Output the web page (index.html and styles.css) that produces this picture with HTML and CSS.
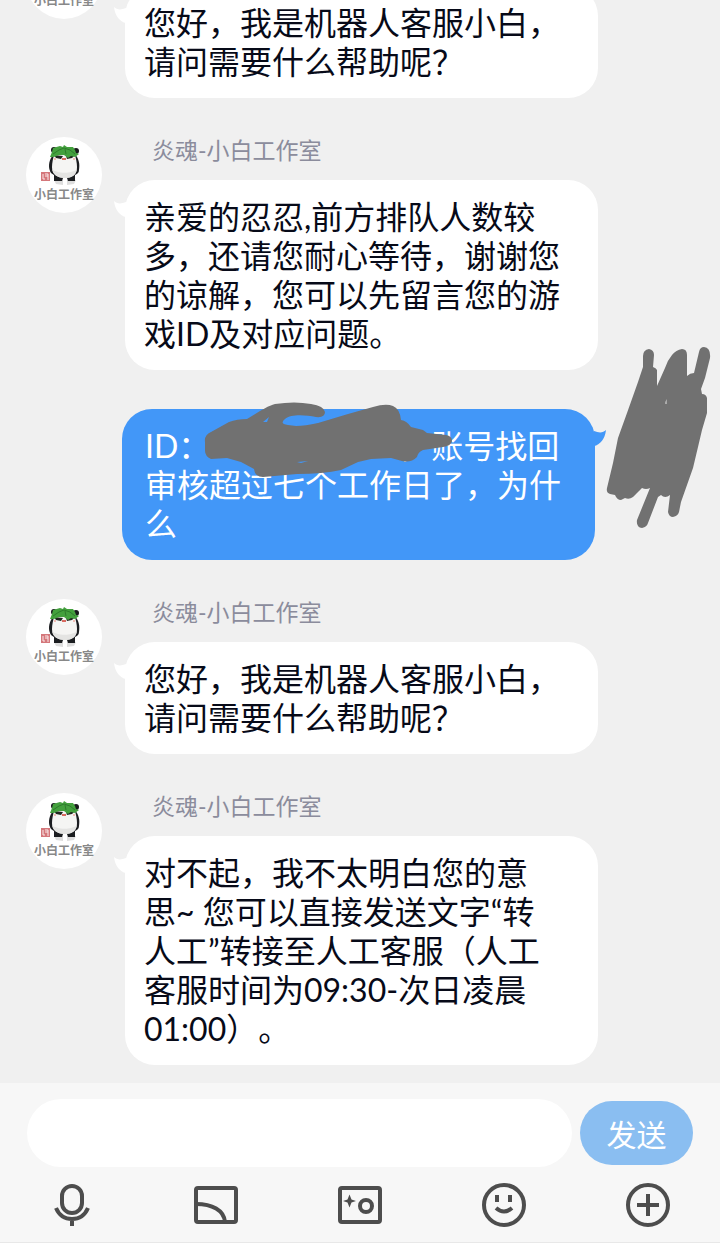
FILE: index.html
```html
<!DOCTYPE html>
<html lang="zh-CN">
<head>
    <meta charset="UTF-8">
    <title>小白工作室</title>
    <meta name="viewport" content="width=device-width, initial-scale=1.0">
    <link rel="stylesheet" href="styles.css">
</head>
<body>
    <svg class="defs" aria-hidden="true">
        <symbol id="panda" viewBox="0 0 76 76">
            <circle cx="38" cy="38" r="38" fill="#fff"/>
            <path d="M28 43h9v5l-7-1zM41 43h9l-2 4-7 1z" fill="#ddd"/>
            <circle cx="28" cy="13" r="3" fill="#17191b"/>
            <circle cx="50" cy="14" r="3" fill="#17191b"/>
            <path d="M28 17c-5 5-6 12-4 17 1 3 3 3 4 4v6h8l1-3h4l1 3h7v-6c2-1 4-2 4-5 1-6 0-11-4-16z" fill="#1b1d20"/>
            <path d="M28 18c-1 4-2 8-2 12 0 7 5 11 13 11s12-4 12-11c0-4-1-8-2-12z" fill="#f5f5f3"/>
            <path d="M26 32c1 6 6 9 13 9s11-3 12-9c-5 5-20 5-25 0z" fill="#e4e4e2"/>
            <path d="M28 18l9 1-2 3-5-1zM40 19l9-1-3 3-5 1z" fill="#20251f"/>
            <circle cx="29" cy="22" r="1" fill="#f0a9a0"/>
            <circle cx="48" cy="22" r="1" fill="#f0a9a0"/>
            <path d="M36 22h4" fill="none" stroke="#d96a60" stroke-width="2"/>
            <path d="M24 20l2-5 1-4 7-2 3 1 1-2 3 2 6 0 2 3 1 3 3 1-4 3-4-1-3 2-4-3-5 0-5 2z" fill="#43a03d"/>
            <path d="M27 17l6-4 5-2 6 2 5 4M39 12l1 5" fill="none" stroke="#2d7b2c" stroke-width="1"/>
            <rect x="15" y="35" width="9" height="9" fill="#d4777b"/>
            <path d="M17 37v5h2M19 37h3v2h-3M22 39v4" fill="none" stroke="#fbeaea" stroke-width="1"/>
            <text x="8" y="62">小白工作室</text>
        </symbol>
        <symbol id="tail" viewBox="0 0 13 18">
            <path d="M1 1c3 3 7 3 12 1v15C7 16 2 10 1 1z" fill="currentColor"/>
        </symbol>
    </svg>

    <main class="chat">
        <article class="message">
            <svg class="avatar"><use href="#panda"/></svg>
            <div class="content">
                <div class="name">炎魂-小白工作室</div>
                <div class="bubble">
                    <svg class="tail"><use href="#tail"/></svg>
                    您好，我是机器人客服小白，<br>请问需要什么帮助呢？
                </div>
            </div>
        </article>

        <article class="message">
            <svg class="avatar"><use href="#panda"/></svg>
            <div class="content">
                <div class="name">炎魂-小白工作室</div>
                <div class="bubble">
                    <svg class="tail"><use href="#tail"/></svg>
                    亲爱的忍忍,前方排队人数较<br>多，还请您耐心等待，谢谢您<br>的谅解，您可以先留言您的游<br>戏ID及对应问题。
                </div>
            </div>
        </article>

        <article class="message mine">
            <div class="content">
                <div class="bubble">
                    <svg class="tail"><use href="#tail"/></svg>
                    ID：<span class="hidden-id"></span>，账号找回<br>审核超过七个工作日了，为什<br>么
                    <svg class="scribble" viewBox="0 0 250 78">
                        <path fill-rule="evenodd" d="M2 40Q1 33 8 30L26 20Q34 17 44 17C54 11 64 4 72 2Q92-1 108 2Q121 4 122 10Q122 16 113 15C102 13 88 12 82 17Q76 22 85 23L93 24Q102 24 115 21L145 12L170 5Q183 1 190 4Q197 7 198 18Q204 19 208 25L220 28L224 31L243 33Q249 34 249 39Q248 44 240 45L220 48Q215 50 214 55Q208 61 199 59L188 56L168 57L155 60L138 68Q120 72 94 72L60 75Q52 75 51 67L38 60L24 56L8 57Q2 54 2 49zM60 20l6-5-2 5zM94 60l11-1-7 2z"/>
                    </svg>
                </div>
            </div>
            <div class="avatar">
                <svg class="scribble" viewBox="0 0 108 186">
                    <path d="M43 3Q37 4 37 10V21L32 36L21 67L12 92L7 117L1 142Q0 147 4 148L9 149Q11 154 15 154L19 152Q23 154 27 151L36 142Q40 144 44 142L31 174Q30 181 36 182Q41 181 42 177L52 151L55 149Q59 153 64 149L62 166Q63 171 67 171Q72 170 73 166L75 156L87 122L92 101L96 84L101 67V52Q100 48 96 48L95 43L99 32L104 12Q105 2 98 1Q94 1 93 6L88 27Q84 27 81 30V9Q81 3 76 3Q70 4 66 9Q61 15 59 22L51 40V24Q50 22 47 21L48 9Q48 4 43 3z"/>
                    <path class="spot" d="M59 56l2-3v5h-2z"/>
                </svg>
            </div>
        </article>

        <article class="message">
            <svg class="avatar"><use href="#panda"/></svg>
            <div class="content">
                <div class="name">炎魂-小白工作室</div>
                <div class="bubble">
                    <svg class="tail"><use href="#tail"/></svg>
                    您好，我是机器人客服小白，<br>请问需要什么帮助呢？
                </div>
            </div>
        </article>

        <article class="message">
            <svg class="avatar"><use href="#panda"/></svg>
            <div class="content">
                <div class="name">炎魂-小白工作室</div>
                <div class="bubble">
                    <svg class="tail"><use href="#tail"/></svg>
                    对不起，我不太明白您的意<br>思~ 您可以直接发送文字“转<br>人工”转接至人工客服（人工<br>客服时间为09:30-次日凌晨<br>01:00）。
                </div>
            </div>
        </article>
    </main>

    <footer class="composer">
        <form class="send-form">
            <input type="text" class="send-input" aria-label="消息">
            <button type="button" class="send-button">发送</button>
        </form>
        <nav class="tools">
            <button type="button" aria-label="语音">
                <svg viewBox="0 0 48 48">
                    <rect x="14" y="5" width="20" height="27" rx="10"/>
                    <path d="M8 27C11 34 17 38 24 38s13-4 16-11M24 38v7"/>
                </svg>
            </button>
            <button type="button" aria-label="图片">
                <svg viewBox="0 0 48 48">
                    <rect x="4" y="7" width="40" height="34" rx="2"/>
                    <path d="M4 23c16 0 28 6 29 18"/>
                </svg>
            </button>
            <button type="button" aria-label="拍照">
                <svg viewBox="0 0 48 48">
                    <rect x="4" y="7" width="40" height="34" rx="2"/>
                    <circle cx="30" cy="25" r="6"/>
                    <path class="solid" d="M13.500 13.500l2 5 4.500 1.500-4.500 1.500-2 5-2-5-4.500-1.500 4.500-1.500z"/>
                </svg>
            </button>
            <button type="button" aria-label="表情">
                <svg viewBox="0 0 48 48">
                    <circle cx="24" cy="24" r="20"/>
                    <path d="M17 14v7M30 14v7M16 27q8 7 16 0"/>
                </svg>
            </button>
            <button type="button" aria-label="更多">
                <svg viewBox="0 0 48 48">
                    <circle cx="24" cy="24" r="20"/>
                    <path d="M24 13v22M13 24h22"/>
                </svg>
            </button>
        </nav>
    </footer>
</body>
</html>
```
FILE: styles.css
```css
* {
    box-sizing: border-box;
}
body {
    margin: 0;
    height: 100vh;
    display: flex;
    flex-direction: column;
    background: #f0f0f0;
    color: #070a18;
    font-family: Lato, "Noto Sans CJK SC", sans-serif;
    text-spacing-trim: space-all;
}
button,
input {
    border: none;
    padding: 0;
    font-family: inherit;
}
.defs {
    position: absolute;
    width: 0;
    height: 0;
}
.defs text {
    font-size: 12px;
    font-weight: 700;
    font-family: "Noto Sans CJK SC", sans-serif;
    fill: #888;
}

/* messages, newest at the bottom */
.chat {
    flex: 1;
    min-height: 0;
    display: flex;
    flex-direction: column;
    justify-content: flex-end;
    gap: 39px;
    padding: 0 26px 18px;
    overflow: hidden;
}
.message {
    flex-shrink: 0;
    display: flex;
    gap: 23px;
    padding-right: 96px;
}
.message.mine {
    padding-left: 96px;
    padding-right: 0;
}
.avatar {
    position: relative;
    flex-shrink: 0;
    width: 76px;
    height: 76px;
}
.content {
    flex: 1;
}
.name {
    padding-left: 27px;
    margin-bottom: 17px;
    color: #8b8c9c;
    font-size: 23px;
    line-height: 26px;
}
.bubble {
    position: relative;
    padding: 17px 19px;
    border-radius: 30px;
    background: #fff;
    font-size: 32px;
    line-height: 39px;
    white-space: nowrap;
}
.mine .bubble {
    padding: 17px 23px;
    background: #4297f8;
    color: #fff;
}
.tail {
    position: absolute;
    top: 20px;
    left: -12px;
    width: 13px;
    height: 18px;
    color: #fff;
}
.mine .tail {
    left: auto;
    right: -12px;
    color: #4297f8;
    transform: scaleX(-1);
}
.hidden-id {
    display: inline-block;
    width: 189px;
}

/* grey marker over private details */
.scribble {
    position: absolute;
    fill: #717171;
}
.bubble .scribble {
    top: -7px;
    left: 81px;
    width: 250px;
    height: 78px;
}
.avatar .scribble {
    top: -63px;
    left: -12px;
    width: 108px;
    height: 186px;
}
.scribble .spot {
    fill: #aaa;
}

/* input area */
.composer {
    background: #f7f7f7;
    border-bottom: 1px solid #e8e8e8;
}
.send-form {
    display: flex;
    align-items: center;
    gap: 8px;
    padding: 16px 27px 0;
}
.send-input {
    flex: 1;
    min-width: 0;
    height: 68px;
    padding: 0 32px;
    border-radius: 34px;
    background: #fff;
    font-size: 32px;
    outline: none;
}
.send-button {
    width: 113px;
    height: 64px;
    border-radius: 32px;
    background: #8abef1;
    color: #fff;
    font-size: 30px;
}
.tools {
    display: flex;
    padding: 14px 0 13px;
}
.tools button {
    flex: 1;
    display: flex;
    justify-content: center;
    background: none;
}
.tools svg {
    width: 48px;
    height: 48px;
    fill: none;
    stroke: #4d4d4d;
    stroke-width: 4;
}
.tools .solid {
    fill: #4d4d4d;
    stroke: none;
}
```
